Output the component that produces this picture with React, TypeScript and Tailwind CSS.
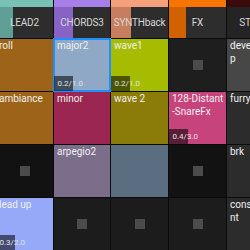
import React from 'react';

type Track = { name: string; strip: string; meter?: string; label: string };
type Clip = { name?: string; bg: string; pos?: string; selected?: boolean; wrap?: string };

const tracks: Track[] = [
  { name: 'LEAD2', strip: 'bg-[#78c2b3]', meter: 'bg-[#5f9f95] w-[17px]', label: 'bg-[#2d2d2d]' },
  { name: 'CHORDS3', strip: 'bg-[#a67fe8]', meter: 'bg-[#8663c4] w-[19px]', label: 'bg-[#2d2d2d]' },
  { name: 'SYNTHback', strip: 'bg-[#f4a07b]', meter: 'bg-[#c77e5e] w-[20px]', label: 'bg-[#2d2d2d]' },
  { name: 'FX', strip: 'bg-[#f77400]', meter: 'bg-[#d26200] w-[17px]', label: 'bg-[#2d2d2d]' },
  { name: 'STOMP', strip: 'bg-[#3b0b0b]', label: 'bg-[#242424]' },
];

// rows of scenes, one entry per track
const scenes: Clip[][] = [
  [
    { name: 'roll', bg: 'bg-[#9d6419]' },
    { name: 'major2', bg: 'bg-[#8ea8c6]', pos: '0.2/1.0', selected: true },
    { name: 'wave1', bg: 'bg-[#a6bc00]', pos: '0.2/1.0' },
    { bg: 'bg-[#1e1e1e]' },
    { name: 'develop', bg: 'bg-[#474747]', wrap: 'w-[31px]' },
  ],
  [
    { name: 'ambiance', bg: 'bg-[#9d6419]' },
    { name: 'minor', bg: 'bg-[#9b2651]' },
    { name: 'wave 2', bg: 'bg-[#8b7c0a]' },
    { name: '128-Distant-SnareFx', bg: 'bg-[#c6437b]', pos: '0.4/3.0' },
    { name: 'furry', bg: 'bg-[#2c2c2c]' },
  ],
  [
    { bg: 'bg-[#121212]' },
    { name: 'arpegio2', bg: 'bg-[#7c6d8a]' },
    { bg: 'bg-[#5b6e81]', name: '' },
    { bg: 'bg-[#121212]' },
    { name: 'brk', bg: 'bg-[#2c2c2c]' },
  ],
  [
    { name: 'lead up', bg: 'bg-[#96a9f9]', pos: '0.3/2.0' },
    { bg: 'bg-[#1c1c1c]' },
    { bg: 'bg-[#1c1c1c]' },
    { bg: 'bg-[#1c1c1c]' },
    { name: 'consonant', bg: 'bg-[#2c2c2c]', wrap: 'w-[40px]' },
  ],
];

function TrackHeader({ t }: { t: Track }) {
  return (
    <div className="flex flex-col">
      <div className={`h-[7px] ${t.strip}`} />
      <div className={`relative flex flex-1 items-center justify-center overflow-hidden ${t.label}`}>
        {t.meter && <div className={`absolute left-0 top-0 bottom-0 ${t.meter}`} />}
        <span className="relative whitespace-nowrap text-[10px] tracking-[-0.2px] text-[#d6d6d6]">{t.name}</span>
      </div>
    </div>
  );
}

function ClipCell({ c }: { c: Clip }) {
  if (c.name === undefined) {
    return (
      <div className={`flex items-center justify-center ${c.bg}`}>
        <div className="h-[10px] w-[10px] bg-[#4b4b4b]" />
      </div>
    );
  }
  return (
    <div
      className={`relative ${c.bg} ${c.selected ? 'z-10 outline-2 -outline-offset-1 outline-[#1e8fff]' : ''}`}
    >
      <div className="h-full overflow-hidden pl-[3px] pr-[2px] pt-px">
        <div className={`break-all text-[10px] leading-[12.5px] text-[#f0f0f0] ${c.wrap ?? ''}`}>{c.name}</div>
      </div>
      {c.pos && (
        <>
          <div className="absolute bottom-0 left-0 h-[15px] w-[19px] bg-black/55" />
          <span className="absolute bottom-[2px] left-[3.5px] text-[8px] leading-[10px] text-[#e2e2e2]">
            {c.pos}
          </span>
        </>
      )}
    </div>
  );
}

export default function App() {
  return (
    <div className="h-[250px] w-[250px] overflow-hidden bg-[#0b0b0b] font-[Roboto,sans-serif]">
      <div className="-ml-1 grid w-max grid-cols-[57px_56px_57px_57px_57px] grid-rows-[38px_repeat(4,52px)] gap-px">
        {tracks.map((t) => (
          <TrackHeader key={t.name} t={t} />
        ))}
        {scenes.map((row, i) => row.map((c, j) => <ClipCell key={`${i}-${j}`} c={c} />))}
      </div>
    </div>
  );
}
